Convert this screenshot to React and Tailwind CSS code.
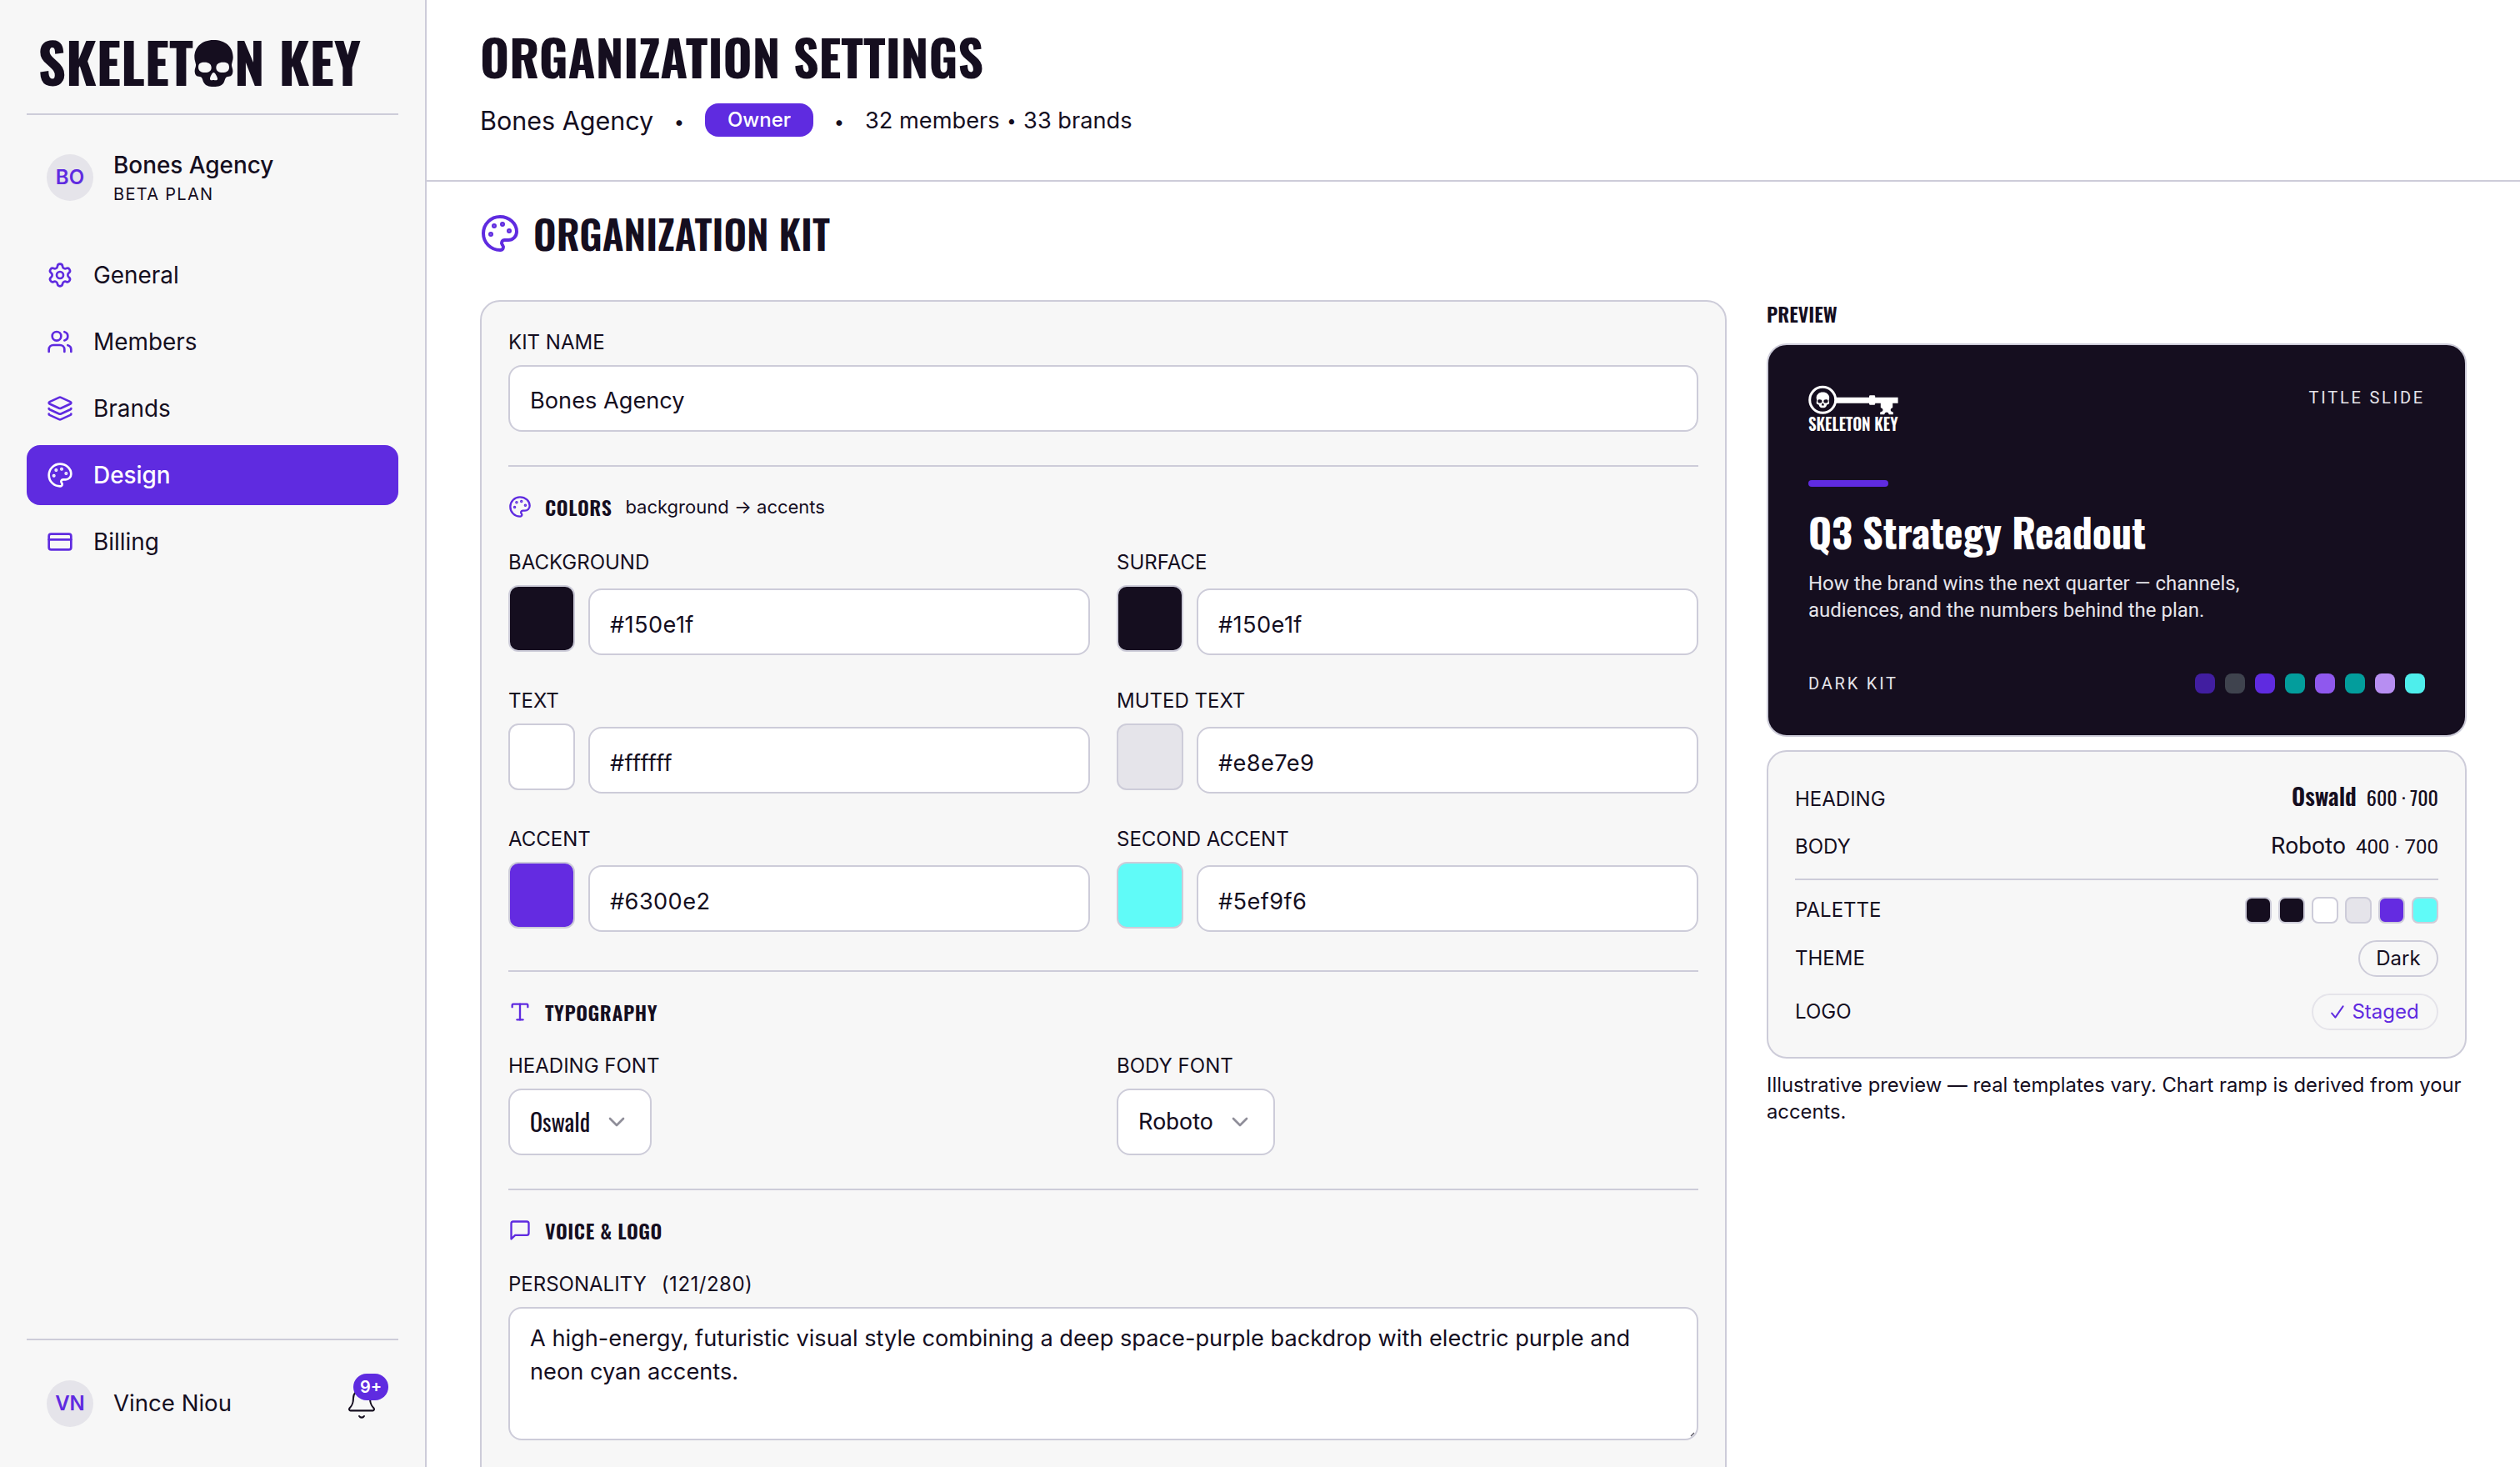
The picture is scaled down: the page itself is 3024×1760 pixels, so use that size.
import React from 'react';
import { Settings, Users, Layers, Palette, CreditCard, Bell, Type, ChevronDown } from 'lucide-react';

const navItems = [
  { label: 'General', icon: Settings },
  { label: 'Members', icon: Users },
  { label: 'Brands', icon: Layers },
  { label: 'Design', icon: Palette, active: true },
  { label: 'Billing', icon: CreditCard },
];

const colors = [
  { label: 'Background', value: '#150e1f', swatch: 'bg-[#150e1f]' },
  { label: 'Surface', value: '#150e1f', swatch: 'bg-[#150e1f]' },
  { label: 'Text', value: '#ffffff', swatch: 'bg-white' },
  { label: 'Muted text', value: '#e8e7e9', swatch: 'bg-[#e5e4ea]' },
  { label: 'Accent', value: '#6300e2', swatch: 'bg-[#642be1]' },
  { label: 'Second accent', value: '#5ef9f6', swatch: 'bg-[#60fbf8]' },
];

const chartRamp = [
  'bg-[#411ea0]',
  'bg-[#3f434e]',
  'bg-[#5f2be0]',
  'bg-[#039d9c]',
  'bg-[#8f58ee]',
  'bg-[#039d9c]',
  'bg-[#b78ef2]',
  'bg-[#4eeeec]',
];

const SkullShape = ({ hole }) => (
  <>
    <path d="M71 0C112 0 141 24 141 62C141 72 137 80 136 88C135 96 141 104 140 114C139 128 133 131 122 132C112 134 113 142 108 152C102 164 88 168 71 168C54 168 41 164 35 152C30 142 31 134 21 132C10 131 4 128 3 114C2 104 8 96 7 88C6 80 2 72 2 62C2 24 30 0 71 0Z" />
    <path
      className={hole}
      d="M16 98C16 84 24 80 38 80C54 80 63 87 63 99C63 111 54 117 40 117C26 117 16 111 16 98ZM127 98C127 84 119 80 105 80C89 80 80 87 80 99C80 111 89 117 103 117C117 117 127 111 127 98ZM71 117C76 117 86 134 85 141C84 147 76 144 71 144C66 144 59 147 58 141C57 134 66 117 71 117Z"
    />
  </>
);

const Wordmark = () => (
  <svg viewBox="0 0 446 72" className="h-[72px] w-[446px] overflow-visible font-['Oswald'] text-[66.5px] font-bold" fill="#150e1f">
    <text x="13.4" y="63" textLength="186.6" lengthAdjust="spacingAndGlyphs">SKELET</text>
    <g transform="translate(200.7 8) scale(0.3333)">
      <SkullShape hole="fill-[#f7f7f7]" />
    </g>
    <text x="249" y="63" textLength="152" lengthAdjust="spacingAndGlyphs">N KEY</text>
  </svg>
);

const KeyLogo = () => (
  <svg viewBox="0 0 108 56" className="h-[56px] w-[108px] overflow-visible font-['Oswald'] text-[20px] font-semibold" fill="#fff">
    <circle cx="17.2" cy="17.8" r="15.5" fill="none" stroke="#fff" strokeWidth="3" />
    <g transform="translate(9.4 8.4) scale(0.112)">
      <SkullShape hole="fill-[#150e1f]" />
    </g>
    <path d="M33 14.8H73V13.4Q73 12.2 74.2 12.2H79Q80.2 12.2 80.2 13.4V14.8H107.6V21.8H101.2V27Q98.6 28 98.6 30Q98.6 31.6 101.8 32.6V35.2H96.8Q96.4 32.6 94 32.6Q91.6 32.6 91.2 35.2H86.2V32.6Q89.6 31.6 89.6 30Q89.6 28 86.8 27V21.8H80.2V22.6Q80.2 23.8 79 23.8H74.2Q73 23.8 73 22.6V21.8H33Z" />
    <text x="0" y="55.3" textLength="107.5" lengthAdjust="spacingAndGlyphs">SKELETON KEY</text>
  </svg>
);

const MessageIcon = () => (
  <svg viewBox="0 0 24 24" className="size-7 text-[#5f2be0]" fill="none" stroke="currentColor" strokeWidth="2" strokeLinecap="round" strokeLinejoin="round">
    <path d="M21 15a2 2 0 0 1-2 2H7l-4 4V5a2 2 0 0 1 2-2h14a2 2 0 0 1 2 2z" />
  </svg>
);

const TickIcon = () => (
  <svg viewBox="0 0 16 16" className="size-4" fill="none" stroke="currentColor" strokeWidth="2" strokeLinecap="round" strokeLinejoin="round">
    <path d="M1.2 9.6L5.4 14.6L14.6 1.4" />
  </svg>
);

const Label = ({ children }) => (
  <div className="mb-3.5 h-[30px] text-[24px] leading-[33px] whitespace-pre uppercase">{children}</div>
);

const Divider = ({ className }) => <div className={`h-0.5 bg-[#cdccd9] ${className}`}></div>;

const SectionTitle = ({ icon, title, hint }) => (
  <div className="mt-8 flex h-8 items-center gap-4">
    {icon}
    <h3 className="font-['Oswald'] text-[24px] leading-8 font-semibold tracking-[0.56px] uppercase">{title}</h3>
    {hint && <span className="text-[22px] leading-8">{hint}</span>}
  </div>
);

const Sidebar = () => (
  <aside className="flex h-full w-[512px] shrink-0 flex-col border-r-2 border-[#cdccd9] bg-[#f7f7f7] px-8">
    <div className="h-[138px] border-b-2 border-[#cdccd9] pt-10">
      <Wordmark />
    </div>

    <div className="mt-10 flex items-center gap-6 px-6">
      <div className="flex size-14 items-center justify-center rounded-full bg-[#e5e4ea] text-[24px] font-semibold text-[#5f2be0]">BO</div>
      <div>
        <div className="text-[27.9px] leading-10 font-medium">Bones Agency</div>
        <div className="text-[20px] leading-[30px] tracking-[1.3px]">BETA PLAN</div>
      </div>
    </div>

    <nav className="mt-[46px] flex flex-col gap-2">
      {navItems.map(({ label, icon: Icon, active }) => (
        <a
          key={label}
          className={`flex h-[72px] items-center gap-6 rounded-[16px] px-6 text-[27.9px] ${active ? 'bg-[#5f2be0] font-medium text-white' : ''}`}
        >
          <Icon size={32} className={active ? 'text-white' : 'text-[#5f2be0]'} />
          <span className="pt-0.5">{label}</span>
        </a>
      ))}
    </nav>

    <div className="mt-auto flex h-[154px] items-center gap-6 border-t-2 border-[#cdccd9] px-6">
      <div className="flex size-14 items-center justify-center rounded-full bg-[#e5e4ea] text-[24px] font-semibold text-[#5f2be0]">VN</div>
      <span className="text-[27.6px]">Vince Niou</span>
      <div className="relative ml-auto size-10">
        <Bell size={40} strokeWidth={1.25} />
        <span className="absolute -top-4 left-2.5 flex h-8 w-[42px] items-center justify-center rounded-full bg-[#5f2be0] text-[20px] font-semibold text-white">9+</span>
      </div>
    </div>
  </aside>
);

const Header = () => (
  <header className="h-[218px] border-b-2 border-[#cdccd9] px-16 pt-[31px]">
    <h1 className="font-['Oswald'] text-[60px] leading-[72px] font-bold">ORGANIZATION SETTINGS</h1>
    <div className="mt-[21px] flex h-10 items-center gap-6">
      <span className="w-[208px] pt-0.5 text-[30.5px] leading-10 whitespace-nowrap">Bones Agency</span>
      <span className="w-3.5 pt-1 text-center text-[22px]">•</span>
      <span className="flex h-10 w-[130px] items-center justify-center rounded-[16px] bg-[#5f2be0] text-[24px] font-medium text-white">Owner</span>
      <span className="w-3.5 pt-1 text-center text-[22px]">•</span>
      <span className="flex pt-0.5 text-[27.2px] leading-10">
        32 members<span className="w-[28.5px] text-center text-[20px]">•</span>33 brands
      </span>
    </div>
  </header>
);

const FontSelect = ({ label, value, family, width }) => (
  <div>
    <Label>{label}</Label>
    <button className={`flex h-20 items-center justify-between rounded-[16px] border-2 border-[#cdccd9] bg-white px-6 text-[28px] ${width} ${family}`}>
      <span>{value}</span>
      <ChevronDown size={32} className="text-[#8f8e99]" />
    </button>
  </div>
);

const KitForm = () => (
  <div className="h-[1500px] w-[1496px] shrink-0 rounded-[24px] border-2 border-[#cdccd9] bg-[#f7f7f7] p-8">
    <Label>Kit name</Label>
    <div className="h-20 rounded-[16px] border-2 border-[#cdccd9] bg-white px-6 pt-[3px] text-[27.2px] leading-[76px]">Bones Agency</div>

    <Divider className="mt-10" />
    <SectionTitle icon={<Palette size={28} className="text-[#5f2be0]" />} title="Colors" hint="background → accents" />
    <div className="mt-[34px] grid grid-cols-2 gap-x-8 gap-y-[38px]">
      {colors.map((c) => (
        <div key={c.label}>
          <Label>{c.label}</Label>
          <div className="flex h-[84px] gap-4">
            <div className={`size-20 rounded-[12px] border-2 border-[#cdccd9] ${c.swatch}`}></div>
            <div className="mt-1 h-20 flex-1 rounded-[16px] border-2 border-[#cdccd9] bg-white px-6 pt-1 text-[27.2px] leading-[76px] tracking-[0.4px]">{c.value}</div>
          </div>
        </div>
      ))}
    </div>

    <Divider className="mt-[46px]" />
    <SectionTitle icon={<Type size={28} className="text-[#5f2be0]" />} title="Typography" />
    <div className="mt-8 grid grid-cols-2 gap-x-8">
      <FontSelect label="Heading font" value="Oswald" family="font-['Oswald']" width="w-[172px]" />
      <FontSelect label="Body font" value="Roboto" family="font-['Roboto']" width="w-[190px]" />
    </div>

    <Divider className="mt-10" />
    <SectionTitle icon={<MessageIcon />} title="Voice & Logo" />
    <div className="mt-8">
      <Label>
        Personality<span className="ml-[18px] tracking-[0.5px]">(121/280)</span>
      </Label>
      <div className="relative h-40 rounded-[16px] border-2 border-[#cdccd9] bg-white px-6 py-4 text-[27.2px] leading-10">
        A high-energy, futuristic visual style combining a deep space-purple backdrop with electric purple and neon cyan accents.
        <svg viewBox="0 0 6 6" className="absolute right-0.5 bottom-0.5 size-1.5" stroke="#55535f" strokeWidth="1.2">
          <path d="M1 5L5 1" />
        </svg>
      </div>
    </div>
  </div>
);

const TitleSlide = () => (
  <div className="flex h-[472px] flex-col rounded-[24px] border-2 border-[#cdccd9] bg-[#150e1f] p-12 font-['Roboto'] text-[#e5e4ea]">
    <div className="flex items-start justify-between">
      <KeyLogo />
      <span className="pt-px text-[20px] leading-[28px] tracking-[2.8px]">TITLE SLIDE</span>
    </div>
    <div className="mt-[58px] h-2 w-24 rounded-full bg-[#5f2be0]"></div>
    <h4 className="mt-[26px] font-['Oswald'] text-[48px] leading-[56px] font-bold text-white">Q3 Strategy Readout</h4>
    <p className="mt-[18px] w-[560px] text-[24px] leading-8">
      How the brand wins the next quarter — channels, audiences, and the numbers behind the plan.
    </p>
    <div className="mt-auto flex h-7 items-center justify-between">
      <span className="text-[20px] leading-7 tracking-[2.8px]">DARK KIT</span>
      <div className="flex gap-3">
        {chartRamp.map((c, i) => (
          <span key={i} className={`size-6 rounded-[8px] ${c}`}></span>
        ))}
      </div>
    </div>
  </div>
);

const KitSummary = () => (
  <div className="mt-4 flex flex-col gap-5 rounded-[24px] border-2 border-[#cdccd9] bg-[#f7f7f7] p-8 text-[24px]">
    <div className="flex h-[42px] items-baseline justify-between leading-[42px]">
      <span>HEADING</span>
      <span className="font-['Oswald']">
        <span className="mr-3 text-[28px] font-semibold">Oswald</span>600 · 700
      </span>
    </div>
    <div className="flex h-[38px] items-baseline justify-between leading-[38px]">
      <span>BODY</span>
      <span className="font-['Roboto']">
        <span className="mr-3 text-[28px]">Roboto</span>400 · 700
      </span>
    </div>
    <Divider className="" />
    <div className="flex h-8 items-center justify-between">
      <span>PALETTE</span>
      <div className="flex gap-2">
        {colors.map((c) => (
          <span key={c.label} className={`size-8 rounded-[8px] border-2 border-[#cdccd9] ${c.swatch}`}></span>
        ))}
      </div>
    </div>
    <div className="flex h-11 items-center justify-between">
      <span>THEME</span>
      <span className="flex h-11 w-24 items-center justify-center rounded-full border-2 border-[#cdccd9]">Dark</span>
    </div>
    <div className="flex h-11 items-center justify-between">
      <span>LOGO</span>
      <span className="flex h-11 w-[152px] items-center justify-center gap-[9px] rounded-full border-2 border-[#e5e4ea] text-[#5f2be0]">
        <TickIcon />
        Staged
      </span>
    </div>
  </div>
);

const App = () => {
  return (
    <div className="flex h-[1760px] w-[3024px] overflow-hidden bg-white font-['Inter',sans-serif] text-[#150e1f]">
      <Sidebar />
      <main className="flex-1">
        <Header />
        <div className="px-16 pt-[38px]">
          <div className="flex h-12 items-center gap-4">
            <Palette size={48} className="text-[#5f2be0]" />
            <h2 className="font-['Oswald'] text-[48px] leading-[48px] font-semibold">ORGANIZATION KIT</h2>
          </div>
          <div className="mt-14 flex gap-12">
            <KitForm />
            <div className="w-[840px]">
              <div className="h-[52px] font-['Oswald'] text-[24px] leading-8 font-semibold">PREVIEW</div>
              <TitleSlide />
              <KitSummary />
              <p className="mt-4 text-[23.8px] leading-8">
                Illustrative preview — real templates vary. Chart ramp is derived from your accents.
              </p>
            </div>
          </div>
        </div>
      </main>
    </div>
  );
};

export default App;
